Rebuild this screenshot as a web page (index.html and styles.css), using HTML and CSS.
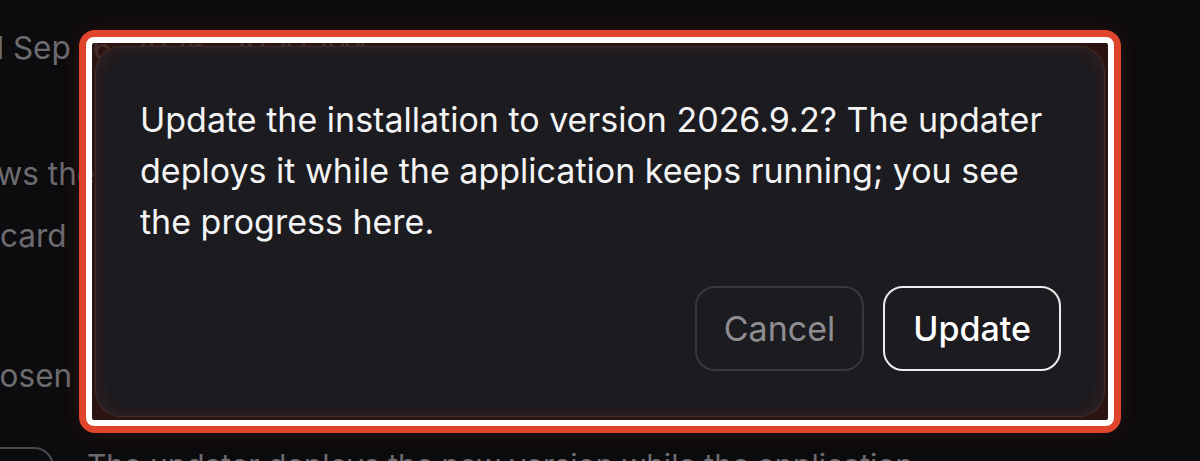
FILE: index.html
```html
<!DOCTYPE html>
<html lang="en">
<head>
<meta charset="utf-8">
<title>Update</title>
<link rel="stylesheet" href="styles.css">
</head>
<body>
  <main class="page">
    <p class="bg-line l1">Scheduled until Sep 16, 2026 · 10:41 AM</p>
    <p class="bg-line l2">shows the latest status of the release</p>
    <p class="bg-line l3">card</p>
    <p class="bg-line l4">chosen</p>
    <div class="bg-row">
      <span class="pill">Auto</span>
      <span class="bg-note">The updater deploys the new version while the application keeps running.</span>
    </div>
  </main>

  <div class="modal-frame">
    <div class="modal-ring">
      <section class="dialog" role="dialog">
        <p class="dialog-text">Update the installation to version 2026.9.2? The updater deploys it while the application keeps running; you see the progress here.</p>
        <div class="dialog-actions">
          <button class="btn btn-cancel">Cancel</button>
          <button class="btn btn-primary">Update</button>
        </div>
      </section>
    </div>
  </div>
</body>
</html>
```

FILE: styles.css
```css
* { box-sizing: border-box; }

html, body {
  margin: 0;
  padding: 0;
}

body {
  width: 1200px;
  height: 461px;
  overflow: hidden;
  background: #0c0b0d;
  font-family: Inter, "Noto Sans", sans-serif;
  position: relative;
}

.page {
  padding-top: 17px;
  color: #6c6b70;
  font-size: 31.5px;
}

.bg-line {
  margin: 0;
  line-height: 62px;
  white-space: nowrap;
}

.l1 { margin-left: -226px; }
.l2 { margin-left: -57px; margin-top: 64px; }
.l3 { margin-left: 0; }
.l4 { margin-left: -37px; margin-top: 78px; }

.bg-row {
  display: flex;
  align-items: flex-start;
  gap: 33px;
  margin-top: 40px;
}

.pill {
  flex: none;
  width: 100px;
  height: 56px;
  margin-left: -46px;
  border: 2px solid #4a494e;
  border-radius: 20px;
  color: transparent;
  line-height: 52px;
  text-align: center;
  font-size: 26px;
}

.bg-note {
  font-size: 30px;
  line-height: 36px;
  max-width: 840px;
}

.modal-frame {
  position: absolute;
  left: 79px;
  top: 30px;
  width: 1042px;
  height: 403px;
  border: 7px solid #e0452b;
  border-radius: 16px;
  box-shadow: 0 0 24px rgba(120, 40, 30, 0.25);
}

.modal-ring {
  height: 100%;
  border: 6px solid #ffffff;
  border-radius: 8px;
  padding: 3px;
  background: rgba(58, 24, 19, 0.75);
}

.dialog {
  height: 100%;
  background: #1c1b1f;
  border: 1px solid rgba(120, 80, 75, 0.35);
  border-radius: 26px;
  box-shadow: inset 0 0 16px rgba(170, 60, 45, 0.22);
  padding: 47px 43px 45px 44px;
  display: flex;
  flex-direction: column;
}

.dialog-text {
  margin: 0;
  color: #f4f4f5;
  font-size: 34px;
  line-height: 51px;
}

.dialog-actions {
  margin-top: auto;
  display: flex;
  justify-content: flex-end;
  gap: 19px;
}

.btn {
  height: 85px;
  padding: 0 28px;
  border-radius: 20px;
  background: transparent;
  font-family: Inter, "Noto Sans", sans-serif;
  font-size: 34px;
  cursor: pointer;
}

.btn-cancel {
  border: 2px solid #38373c;
  color: #8e8d92;
  font-weight: 400;
  padding: 0 27px;
}

.btn-primary {
  border: 2px solid #ececec;
  color: #ffffff;
  font-weight: 500;
}
```
